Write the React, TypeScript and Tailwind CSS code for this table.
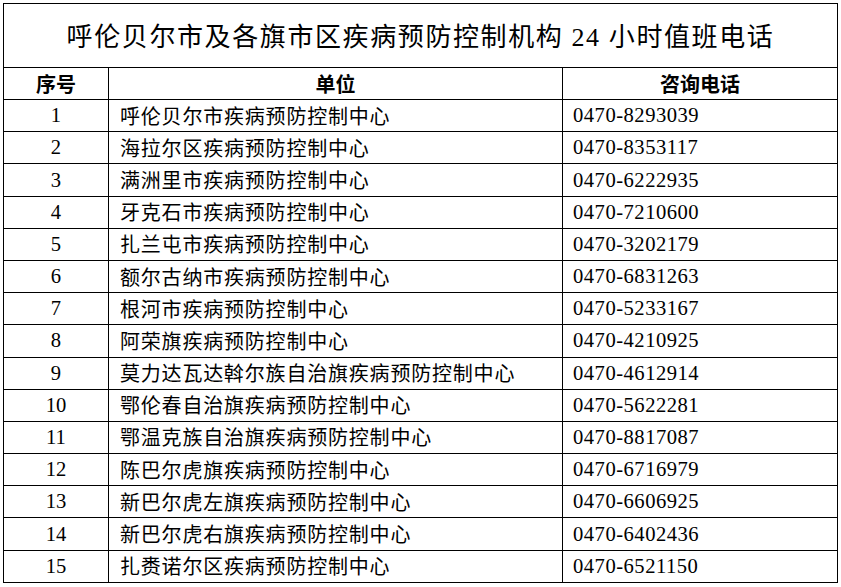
import React from "react";

const rows: [string, string][] = [
  ["呼伦贝尔市疾病预防控制中心", "0470-8293039"],
  ["海拉尔区疾病预防控制中心", "0470-8353117"],
  ["满洲里市疾病预防控制中心", "0470-6222935"],
  ["牙克石市疾病预防控制中心", "0470-7210600"],
  ["扎兰屯市疾病预防控制中心", "0470-3202179"],
  ["额尔古纳市疾病预防控制中心", "0470-6831263"],
  ["根河市疾病预防控制中心", "0470-5233167"],
  ["阿荣旗疾病预防控制中心", "0470-4210925"],
  ["莫力达瓦达斡尔族自治旗疾病预防控制中心", "0470-4612914"],
  ["鄂伦春自治旗疾病预防控制中心", "0470-5622281"],
  ["鄂温克族自治旗疾病预防控制中心", "0470-8817087"],
  ["陈巴尔虎旗疾病预防控制中心", "0470-6716979"],
  ["新巴尔虎左旗疾病预防控制中心", "0470-6606925"],
  ["新巴尔虎右旗疾病预防控制中心", "0470-6402436"],
  ["扎赉诺尔区疾病预防控制中心", "0470-6521150"],
];

const serif = "font-['Liberation_Serif','Noto_Sans_CJK_SC',serif]";
const cjk = "font-['Noto_Sans_CJK_SC',sans-serif]";

const App: React.FC = () => {
  return (
    <div className="min-h-[587px] bg-white pl-[3px] pt-[3px] text-black">
      <table className="w-[834px] table-fixed border-collapse border border-black">
        <colgroup>
          <col className="w-[105px]" />
          <col className="w-[454px]" />
          <col className="w-[275px]" />
        </colgroup>
        <thead>
          <tr className="h-[64px]">
            <th
              colSpan={3}
              className={`border border-black p-0 text-center text-[26px] font-normal tracking-[1.6px] ${serif}`}
            >
              <span className={cjk}>呼伦贝尔市及各旗市区疾病预防控制机构</span>
              <span> 24 </span>
              <span className={cjk}>小时值班电话</span>
            </th>
          </tr>
          <tr className={`h-[32px] text-[20px] font-bold ${cjk}`}>
            <th className="border border-black p-0 text-center">序号</th>
            <th className="border border-black p-0 text-center">单位</th>
            <th className="border border-black p-0 text-center">咨询电话</th>
          </tr>
        </thead>
        <tbody>
          {rows.map(([name, phone], i) => (
            <tr key={phone} className="h-[32.2px]">
              <td className={`border border-black p-0 text-center text-[20.6px] ${serif}`}>{i + 1}</td>
              <td className={`border border-black py-0 pl-[11px] text-[20px] tracking-[0.8px] ${cjk}`}>{name}</td>
              <td className={`border border-black py-0 pl-[10px] text-[20.6px] tracking-[0.5px] ${serif}`}>{phone}</td>
            </tr>
          ))}
        </tbody>
      </table>
    </div>
  );
};

export default App;
